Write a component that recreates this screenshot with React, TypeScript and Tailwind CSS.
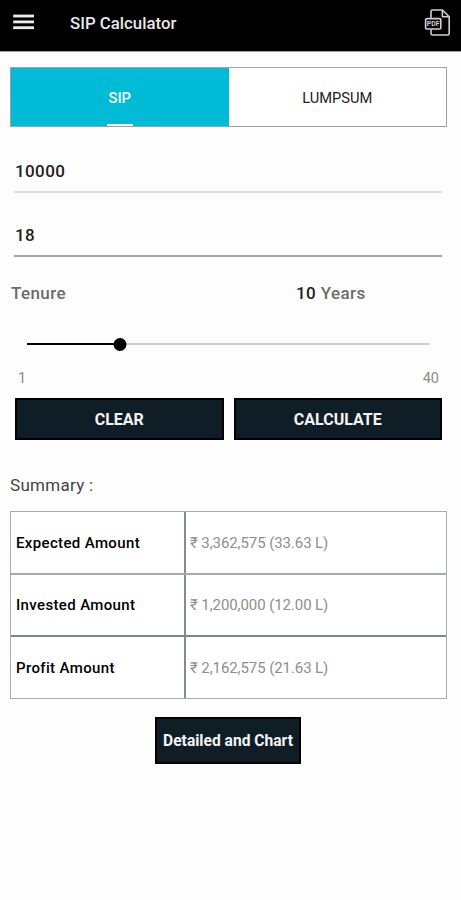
import { useState } from "react";
import clsx from "clsx";

const MIN_YEARS = 1;
const MAX_YEARS = 40;

const summary = [
  { label: "Expected Amount", value: "₹ 3,362,575 (33.63 L)", line: "h-[63px] border-b-2 border-[#a5abac]" },
  { label: "Invested Amount", value: "₹ 1,200,000 (12.00 L)", line: "h-[62px] border-b-2 border-[#7d8787]" },
  { label: "Profit Amount", value: "₹ 2,162,575 (21.63 L)", line: "h-[61px]" },
];

function MenuIcon() {
  return (
    <svg width="22" height="16" viewBox="0 0 22 16" fill="#ececec">
      <rect x="0.2" y="0.6" width="20.8" height="2.8" />
      <rect x="0.2" y="6.5" width="20.8" height="2.8" />
      <rect x="0.2" y="12.3" width="20.8" height="2.8" />
    </svg>
  );
}

function PdfIcon() {
  return (
    <svg width="27" height="28" viewBox="0 0 27 28" fill="none" stroke="#cfcfcf" strokeWidth="1.6" strokeLinejoin="round">
      <path d="M7 9V2.6Q7 1 8.6 1H18.4L25.2 7.8V24.4Q25.2 26 23.6 26H8.6Q7 26 7 24.4V20.5" />
      <path d="M18.4 1V7.8H25.2" />
      <rect x="1.6" y="9.6" width="15.2" height="10.4" rx="1.2" />
      <text
        x="9.2"
        y="17.4"
        textAnchor="middle"
        fontSize="7"
        fontWeight="700"
        fill="#cfcfcf"
        stroke="none"
        fontFamily="Roboto, sans-serif"
      >
        PDF
      </text>
    </svg>
  );
}

export default function App() {
  const [tab, setTab] = useState("SIP");
  const [amount, setAmount] = useState("10000");
  const [rate, setRate] = useState("18");
  const [years, setYears] = useState(10);

  const percent = ((years - MIN_YEARS) / (MAX_YEARS - MIN_YEARS)) * 100;

  const handleClear = () => {
    setAmount("");
    setRate("");
    setYears(MIN_YEARS);
  };

  return (
    <div className="min-h-[900px] w-full bg-[#fdfdfd] font-[Roboto,sans-serif] text-[#222]">
      <header className="flex h-[52px] items-start border-b border-[#a3a3a3] bg-black pt-[9px] pr-[10px] pl-[13px]">
        <button className="mt-[5px]" aria-label="Menu">
          <MenuIcon />
        </button>
        <h1 className="ml-[35px] text-[16.8px] leading-[29px] font-medium text-[#e8e8e8]">SIP Calculator</h1>
        <button className="ml-auto" aria-label="Export PDF">
          <PdfIcon />
        </button>
      </header>

      <main className="flex flex-col pt-[15px] pr-[14px] pl-[10px]">
        {/* Tabs */}
        <div className="flex h-[60px] border border-[#9da3a4] bg-white">
          {["SIP", "LUMPSUM"].map((name) => (
            <button
              key={name}
              onClick={() => setTab(name)}
              className={clsx(
                "flex flex-1 flex-col items-center text-[14.7px]",
                tab === name ? "bg-[#00bbd6] font-medium text-white" : "text-[#222]"
              )}
            >
              <span className="flex flex-1 items-center pt-1">{name}</span>
              <span className={clsx("h-[2px] w-[26px]", tab === name && "bg-white")}></span>
            </button>
          ))}
        </div>

        {/* Inputs */}
        <div className="mt-[24px] mr-[5px] ml-[4px] flex flex-col">
          <input
            value={amount}
            onChange={(e) => setAmount(e.target.value)}
            className="h-[42px] border-b-2 border-[#dedede] pb-[1px] pl-[1px] text-[17px] font-medium tracking-[0.4px] outline-none"
          />
          <input
            value={rate}
            onChange={(e) => setRate(e.target.value)}
            className="mt-[22px] h-[42px] border-b-2 border-[#a5a5a5] pb-[1px] pl-[1px] text-[17px] font-medium tracking-[0.4px] outline-none"
          />
        </div>

        {/* Tenure */}
        <div className="mt-[23px] flex pl-px text-[17px] leading-[26px] font-medium tracking-[0.4px] text-[#6b6b6b]">
          <span className="w-[285px]">Tenure</span>
          <span>
            <span className="text-[#222]">{years}</span> Years
          </span>
        </div>
        <div className="relative mt-[31px] mr-[17px] ml-[17px] flex h-[14px] items-center">
          <div className="h-[2px] w-full bg-[#d0d0d0]">
            <div className="h-full bg-black" style={{ width: `${percent}%` }}></div>
          </div>
          <div
            className="absolute size-[13px] -translate-x-1/2 rounded-full bg-black"
            style={{ left: `${percent}%` }}
          ></div>
          <input
            type="range"
            min={MIN_YEARS}
            max={MAX_YEARS}
            value={years}
            onChange={(e) => setYears(Number(e.target.value))}
            className="absolute inset-0 w-full opacity-0"
          />
        </div>
        <div className="mt-[18px] mr-[8px] ml-[8px] flex justify-between text-[14.5px] leading-[20px] text-[#8c8c8c]">
          <span>{MIN_YEARS}</span>
          <span>{MAX_YEARS}</span>
        </div>

        <div className="mt-[9px] mr-[5px] ml-[5px] flex gap-[10px] text-[16px] font-bold text-[#f4f4f4]">
          <button onClick={handleClear} className="h-[42px] flex-1 border-2 border-black bg-[#0f1e26] pt-[2px]">
            CLEAR
          </button>
          <button className="h-[42px] flex-1 border-2 border-black bg-[#0f1e26] pt-[2px]">CALCULATE</button>
        </div>

        {/* Summary */}
        <h2 className="mt-[33px] text-[17px] leading-[24px] tracking-[0.3px] text-[#444]">Summary :</h2>
        <div className="mt-[14px] border border-[#a8acad] bg-white">
          {summary.map((row) => (
            <div key={row.label} className={clsx("flex", row.line)}>
              <div className="flex w-[175px] items-center border-r-2 border-[#858c8e] pt-px pl-[5px] text-[15px] font-medium tracking-[0.36px] text-black">
                {row.label}
              </div>
              <div className="flex items-center pt-px pl-[4px] text-[15px] tracking-[-0.08px] text-[#8e8e8e]">
                {row.value}
              </div>
            </div>
          ))}
        </div>

        <button className="mt-[18px] ml-[145px] h-[47px] w-[146px] border-2 border-black bg-[#0f1e26] pt-[2px] text-[15.6px] font-bold text-[#f4f4f4]">
          Detailed and Chart
        </button>
      </main>
    </div>
  );
}
